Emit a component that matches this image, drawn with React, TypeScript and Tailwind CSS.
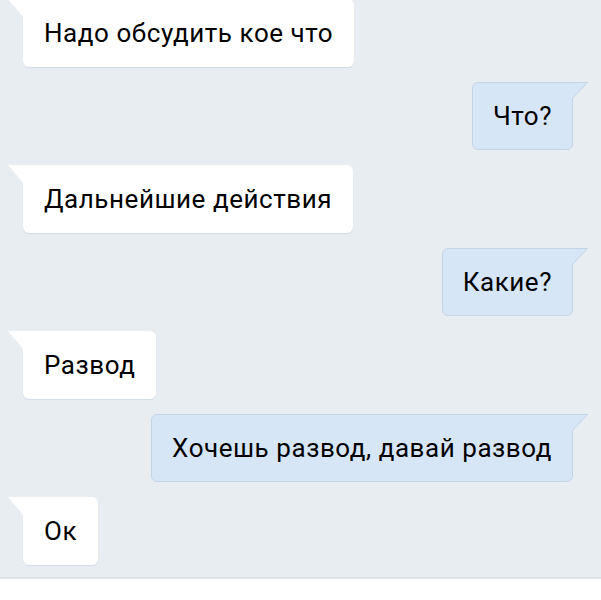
import React from "react";

type Msg = { text: string; out: boolean };

const msgs: Msg[] = [
  { text: "Надо обсудить кое что", out: false },
  { text: "Что?", out: true },
  { text: "Дальнейшие действия", out: false },
  { text: "Какие?", out: true },
  { text: "Развод", out: false },
  { text: "Хочешь развод, давай развод", out: true },
  { text: "Ок", out: false },
];

function Bubble({ m }: { m: Msg }) {
  if (m.out) {
    return (
      <div className="flex justify-end pr-[28px]">
        <div className="relative rounded-[6px] rounded-tr-none bg-[#d7e6f7] border border-[#c4d4e7] px-[20px] py-[18px] text-[26px] leading-[30px] tracking-[0.55px] text-black">
          {m.text}
          <svg
            className="absolute top-[-1px] right-[-17px]"
            width="18"
            height="19"
            viewBox="0 0 18 19"
          >
            <path d="M0 0 H17 L1 17 V18 H0 Z" fill="#d7e6f7" />
            <path d="M0 0.5 H16.5 L1 17" fill="none" stroke="#c4d4e7" strokeWidth="1" />
          </svg>
        </div>
      </div>
    );
  }
  return (
    <div className="flex justify-start pl-[23px]">
      <div className="relative rounded-[6px] rounded-tl-none bg-white shadow-[0_1px_1px_#d3dbe4] px-[21px] py-[19px] text-[26px] leading-[30px] tracking-[0.55px] text-black">
        {m.text}
        <svg
          className="absolute top-0 left-[-16px]"
          width="17"
          height="19"
          viewBox="0 0 17 19"
        >
          <path d="M0 0 H17 V19 H16 L0 0 Z" fill="#ffffff" />
          <path d="M0.5 0.3 L16 18" fill="none" stroke="#dfe5ec" strokeWidth="0.8" />
        </svg>
      </div>
    </div>
  );
}

export default function App() {
  return (
    <div
      className="w-[601px] h-[600px] overflow-hidden bg-white flex flex-col"
      style={{ fontFamily: "Roboto, 'Noto Sans', sans-serif" }}
    >
      <div className="h-[578px] bg-[#e8edf2] flex flex-col gap-[15px] pt-0 -mt-px overflow-hidden">
        {msgs.map((m, i) => (
          <Bubble key={i} m={m} />
        ))}
      </div>
      <div className="h-[2px] bg-[#dde3e9]" />
      <div className="flex-1 bg-white" />
    </div>
  );
}
